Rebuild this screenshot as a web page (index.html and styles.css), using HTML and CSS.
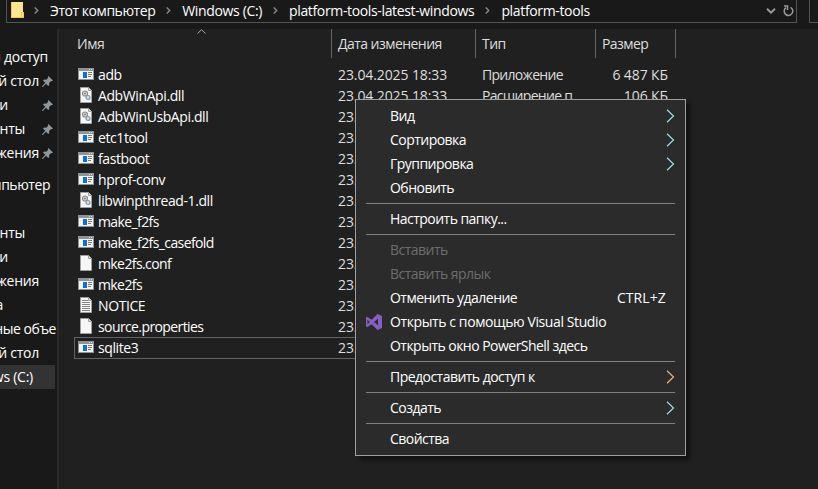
FILE: index.html
```
<!DOCTYPE html>
<html lang="ru">
<head>
<meta charset="utf-8">
<title>platform-tools</title>
<link rel="stylesheet" href="styles.css">
</head>
<body>
<svg class="defs" width="0" height="0">
  <symbol id="app" viewBox="0 0 16 12"><path fill="#909498" d="M0 0h16v12H0z"/><path fill="#f4f4f4" d="M1 3h14v8H1z"/><path fill="#d8dadc" d="M11 1h1v1h-1zM13 1h1v1h-1z"/><path fill="#0873d4" d="M5 4h4v6H5z"/><path fill="#777" d="M10 4h4v1h-4zM10 6h4v1h-4zM10 8h3v1h-3z"/></symbol>
  <symbol id="file" viewBox="0 0 12 16"><path fill="#f7f7f7" stroke="#a0a0a0" d="M.5.5h8l3 3v12H.5z"/><path fill="#ddd" stroke="#a0a0a0" d="M8.500.5v3h3"/></symbol>
  <symbol id="text" viewBox="0 0 12 16"><use href="#file"/><path stroke="#858585" d="M2 3.500h6M2 5.500h8M2 7.500h8M2 9.500h8M2 11.500h8M2 13.500h8"/></symbol>
  <symbol id="dll" viewBox="0 0 12 16"><use href="#file"/><circle cx="5" cy="6.500" r="2.500" fill="#ddd" stroke="#8a8a8a" stroke-width="1.200"/><circle cx="5" cy="6.500" r=".9" fill="#777"/><circle cx="8" cy="10.500" r="2" fill="#cde0ee" stroke="#8797a3" stroke-width="1.200"/></symbol>
  <symbol id="pin" viewBox="0 0 11 11"><path fill="#8d979f" d="M6.500 0 11 4.500l-1.300.7-.6-.3-2 2 .1 2.100-1 1-2.200-2.200L.8 11 0 10.700l.3-.7 3-3.300L1 4.500l1-1 2.200.2 2-2-.3-.7z"/></symbol>
  <symbol id="crumb" viewBox="0 0 5 7"><path fill="none" stroke="#858585" stroke-width="1.500" d="M.7.5 3.700 3.500.7 6.500"/></symbol>
  <symbol id="sub" viewBox="0 0 9 14"><path fill="none" stroke="currentColor" stroke-width="1.200" d="M1 .7 7.500 7 1 13.300"/></symbol>
</svg>
<div class="window">
  <header class="top">
    <div class="address">
      <svg class="folder" width="13" height="16" viewBox="0 0 13 16"><path fill="#ffe494" d="M0 0h12v10h1v6H0z"/><path fill="#f5c84c" d="M0 0h1v16H0zM1 15h12v1H1zM10 10h3v6h-3z"/><path fill="#ffe08a" d="M11 11h1v4h-1z"/></svg>
      <svg class="chev" width="5" height="7"><use href="#crumb"/></svg>
      <span class="crumb c1">Этот компьютер</span>
      <svg class="chev" width="5" height="7"><use href="#crumb"/></svg>
      <span class="crumb">Windows (C:)</span>
      <svg class="chev" width="5" height="7"><use href="#crumb"/></svg>
      <span class="crumb">platform-tools-latest-windows</span>
      <svg class="chev" width="5" height="7"><use href="#crumb"/></svg>
      <span class="crumb">platform-tools</span>
      <span class="tools">
        <svg width="10" height="6" viewBox="0 0 10 6"><path fill="none" stroke="#999" stroke-width="2" d="M1 .8 5 4.600 9 .8"/></svg>
        <svg width="11" height="12" viewBox="0 0 11 12"><path fill="none" stroke="#999" stroke-width="1.500" d="M7.500 2.300A4.300 4.300 0 1 1 3 2.600M1 1h3.500v4"/></svg>
      </span>
    </div>
    <div class="search"></div>
  </header>
  <div class="body">
    <nav class="side">
      <div class="nav quick"><span>доступ</span></div>
      <div class="nav pinned"><span>Рабочий стол</span><svg width="11" height="11"><use href="#pin"/></svg></div>
      <div class="nav pinned e8"><span>Загрузки</span><svg width="11" height="11"><use href="#pin"/></svg></div>
      <div class="nav pinned e25"><span>Документы</span><svg width="11" height="11"><use href="#pin"/></svg></div>
      <div class="nav pinned"><span>Изображения</span><svg width="11" height="11"><use href="#pin"/></svg></div>
      <div class="nav pc e50"><span>Этот компьютер</span></div>
      <div class="nav"></div>
      <div class="nav e25"><span>Документы</span></div>
      <div class="nav e8"><span>Загрузки</span></div>
      <div class="nav e39"><span>Изображения</span></div>
      <div class="nav e3"><span>Музыка</span></div>
      <div class="nav e56"><span>Объемные объе</span></div>
      <div class="nav e39"><span>Рабочий стол</span></div>
      <div class="nav current e33"><span>Windows (C:)</span></div>
    </nav>
    <main class="files">
      <div class="cols">
        <div class="col name">Имя<svg class="sort" width="9" height="5" viewBox="0 0 9 5"><path fill="none" stroke="#a5a5a5" d="M.5 4.500 4.500.7 8.500 4.500"/></svg></div>
        <div class="col date">Дата изменения</div><div class="col type">Тип</div><div class="col size">Размер</div>
      </div>
      <div class="row"><svg class="ic"><use href="#app" width="16" height="12" y="2"/></svg><span class="n">adb</span><span class="d">23.04.2025 18:33</span><span class="t">Приложение</span><span class="s">6 487 КБ</span></div>
      <div class="row"><svg class="ic"><use href="#dll" width="12" height="16" x="2"/></svg><span class="n">AdbWinApi.dll</span><span class="d">23.04.2025 18:33</span><span class="t">Расширение п...</span><span class="s">106 КБ</span></div>
      <div class="row"><svg class="ic"><use href="#dll" width="12" height="16" x="2"/></svg><span class="n">AdbWinUsbApi.dll</span><span class="d">23.04.2025 18:33</span></div>
      <div class="row"><svg class="ic"><use href="#app" width="16" height="12" y="2"/></svg><span class="n">etc1tool</span><span class="d">23.04.2025 18:33</span></div>
      <div class="row"><svg class="ic"><use href="#app" width="16" height="12" y="2"/></svg><span class="n">fastboot</span><span class="d">23.04.2025 18:33</span></div>
      <div class="row"><svg class="ic"><use href="#app" width="16" height="12" y="2"/></svg><span class="n">hprof-conv</span><span class="d">23.04.2025 18:33</span></div>
      <div class="row"><svg class="ic"><use href="#dll" width="12" height="16" x="2"/></svg><span class="n">libwinpthread-1.dll</span><span class="d">23.04.2025 18:33</span></div>
      <div class="row"><svg class="ic"><use href="#app" width="16" height="12" y="2"/></svg><span class="n tight">make_f2fs</span><span class="d">23.04.2025 18:33</span></div>
      <div class="row"><svg class="ic"><use href="#app" width="16" height="12" y="2"/></svg><span class="n tight">make_f2fs_casefold</span><span class="d">23.04.2025 18:33</span></div>
      <div class="row"><svg class="ic"><use href="#file" width="12" height="16" x="2"/></svg><span class="n tight">mke2fs.conf</span><span class="d">23.04.2025 18:33</span></div>
      <div class="row"><svg class="ic"><use href="#app" width="16" height="12" y="2"/></svg><span class="n tight">mke2fs</span><span class="d">23.04.2025 18:33</span></div>
      <div class="row"><svg class="ic"><use href="#text" width="12" height="16" x="2"/></svg><span class="n">NOTICE</span><span class="d">23.04.2025 18:33</span></div>
      <div class="row"><svg class="ic"><use href="#file" width="12" height="16" x="2"/></svg><span class="n tight">source.properties</span><span class="d">23.04.2025 18:33</span></div>
      <div class="row focus"><svg class="ic"><use href="#app" width="16" height="12" y="2"/></svg><span class="n">sqlite3</span><span class="d">23.04.2025 18:33</span></div>
    </main>
  </div>
</div>
<div class="menu">
  <div class="item"><span>Вид</span><svg class="arrow" width="9" height="14"><use href="#sub"/></svg></div>
  <div class="item"><span>Сортировка</span><svg class="arrow" width="9" height="14"><use href="#sub"/></svg></div>
  <div class="item"><span>Группировка</span><svg class="arrow" width="9" height="14"><use href="#sub"/></svg></div>
  <div class="item"><span>Обновить</span></div>
  <div class="sep"></div>
  <div class="item"><span>Настроить папку...</span></div>
  <div class="sep"></div>
  <div class="item off"><span>Вставить</span></div>
  <div class="item off"><span>Вставить ярлык</span></div>
  <div class="item"><span>Отменить удаление</span><span class="key">CTRL+Z</span></div>
  <div class="item wide"><svg class="vs" width="16" height="16" viewBox="0 0 16 16"><path fill="#865fc5" fill-rule="evenodd" d="M11.500 0 16 2v12l-4.500 2-5.800-5.700L1.300 13 0 12.400V3.600L1.300 3l4.400 2.700zM12 4.800 8 8l4 3.200zM1.500 5.800v4.400L3.700 8z"/></svg><span>Открыть с помощью Visual Studio</span></div>
  <div class="item"><span>Открыть окно PowerShell здесь</span></div>
  <div class="sep"></div>
  <div class="item"><span>Предоставить доступ к</span><svg class="arrow warm" width="9" height="14"><use href="#sub"/></svg></div>
  <div class="sep"></div>
  <div class="item"><span>Создать</span><svg class="arrow" width="9" height="14"><use href="#sub"/></svg></div>
  <div class="sep"></div>
  <div class="item"><span>Свойства</span></div>
</div>
</body>
</html>
```

FILE: styles.css
```
* { box-sizing: border-box; }
body { margin: 0; width: 818px; height: 489px; overflow: hidden; background: #191919; color: #fff; font: 14px/20px "Open Sans", "Noto Sans", sans-serif; letter-spacing: -0.4px; white-space: nowrap; }
svg { flex: none; display: block; }
.defs { position: absolute; }
.window { height: 489px; display: flex; flex-direction: column; }
.top { height: 29px; flex: none; display: flex; align-items: flex-start; padding-left: 6px; gap: 12px; }
.address { width: 791px; height: 23px; border: 1px solid #535353; border-top: 0; display: flex; align-items: center; padding: 0 2px 2px 4px; }
.search { flex: 1; height: 23px; border: 1px solid #535353; border-width: 0 0 1px 1px; }
.crumb { padding-top: 2px; letter-spacing: -0.35px; }
.c1 { letter-spacing: -0.45px; }
.chev { margin: 1px 11px 0; }
.folder + .chev { margin-left: 10px; }
.tools { margin-left: auto; padding-top: 1px; display: flex; align-items: center; gap: 7px; }
.body { flex: 1; display: flex; min-height: 0; }
.side { width: 57px; flex: none; overflow: hidden; padding-top: 16px; }
.nav { height: 24px; display: flex; align-items: center; justify-content: flex-end; padding-right: 18px; letter-spacing: -0.25px; }
.nav.quick { padding-right: 9px; justify-content: space-between; }
.quick::before { content: ""; width: 1px; height: 7px; background: #5a1c1e; }
.nav.pinned { padding-right: 4px; }
.nav.pinned svg { margin-left: 3px; }
.nav.e8 svg { margin-left: 34px; }
.nav.e25 svg { margin-left: 17px; }
.nav.pc { margin-top: 8px; letter-spacing: -0.45px; }
.nav.e3:not(.pinned) { padding-right: 54px; }
.nav.e8:not(.pinned) { padding-right: 49px; }
.nav.e25:not(.pinned) { padding-right: 32px; }
.nav.e33 { padding-right: 22px; }
.nav.e50 { padding-right: 7px; }
.nav.e56 { padding-right: 1px; letter-spacing: -0.45px; }
.current { background: #333; width: 55px; }
.files { flex: 1; background: #202020; border-left: 2px solid #2b2b2b; padding-left: 15px; }
.cols { height: 35px; display: flex; color: #dedede; letter-spacing: -0.55px; }
.col { height: 29px; line-height: 29px; border-right: 1px solid #636363; padding-left: 6px; }
.name { width: 258px; padding-left: 3px; position: relative; letter-spacing: -0.4px; }
.sort { position: absolute; left: 123px; top: 0; }
.date { width: 144px; }
.type { width: 120px; }
.size { width: 80px; }
.row { height: 21px; line-height: 21px; display: flex; align-items: flex-start; padding-left: 4px; }
.ic { width: 16px; height: 16px; margin: 2px 4px 0 0; }
.n { width: 240px; }
.tight { letter-spacing: -0.6px; }
.d { width: 144px; color: #dedede; letter-spacing: -0.1px; }
.t { width: 114px; color: #dedede; letter-spacing: -0.7px; }
.s { width: 72px; text-align: right; color: #dedede; letter-spacing: -0.1px; }
.focus { height: 22px; line-height: 19px; width: 600px; border: 1px solid #636363; padding-left: 3px; }
.focus .ic { margin-top: 1px; }
.menu { position: absolute; left: 355px; top: 99px; width: 331px; height: 357px; border: 1px solid #a0a0a0; background: #2b2b2b; padding: 4px 10px; box-shadow: 4px 4px 4px rgba(0,0,0,.45); letter-spacing: -0.53px; }
.item { height: 24px; line-height: 20px; display: flex; align-items: center; padding-left: 24px; }
.wide { letter-spacing: -0.4px; }
.sep { height: 7px; border: solid #2b2b2b; border-width: 3px 0; background: #808080; }
.off { color: #6d6d6d; }
.arrow { margin-left: auto; color: #9be0e8; }
.warm { color: #f2b27c; }
.key { margin-left: auto; margin-right: 9px; letter-spacing: 0.1px; }
.vs { margin: 0 8px 0 -24px; }
```
